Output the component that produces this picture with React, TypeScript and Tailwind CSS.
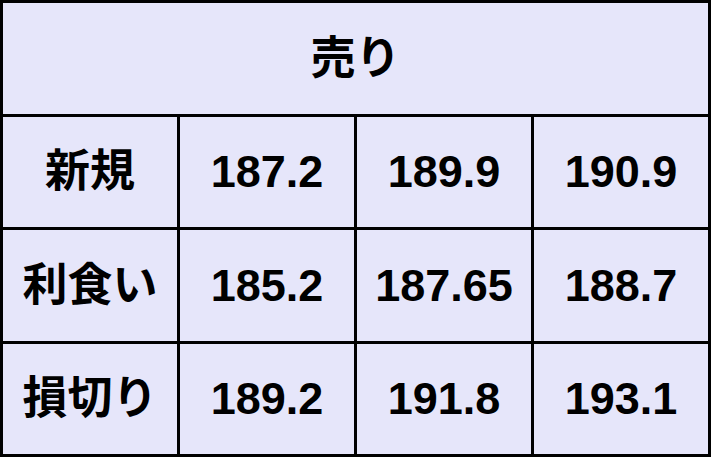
import React from 'react';

const ROWS: { label: string; values: string[] }[] = [
  { label: '新規', values: ['187.2', '189.9', '190.9'] },
  { label: '利食い', values: ['185.2', '187.65', '188.7'] },
  { label: '損切り', values: ['189.2', '191.8', '193.1'] },
];

const cell = 'bg-[#e6e6fa] flex items-center justify-center';

export default function App() {
  return (
    <div
      className="w-[711px] h-[457px] bg-black p-[3px] grid grid-cols-4 grid-rows-4 gap-[3px] text-black font-bold text-[45px] leading-none"
      style={{ fontFamily: '"Liberation Sans", "Noto Sans CJK JP", sans-serif' }}
    >
      {/* Header */}
      <div className={`${cell} col-span-4`}>売り</div>

      {ROWS.map(row => (
        <React.Fragment key={row.label}>
          <div className={cell}>{row.label}</div>
          {row.values.map((v, i) => (
            <div key={i} className={cell}>
              {v}
            </div>
          ))}
        </React.Fragment>
      ))}
    </div>
  );
}
